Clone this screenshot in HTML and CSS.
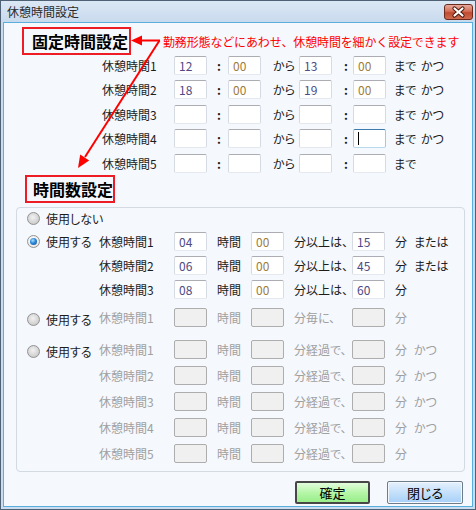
FILE: index.html
```html
<!DOCTYPE html>
<html lang="ja">
<head>
<meta charset="utf-8">
<title>休憩時間設定</title>
<link rel="stylesheet" href="styles.css">
</head>
<body>
<div class="window">
  <div class="titlebar">
    <span class="title">休憩時間設定</span>
    <span class="close">
      <svg width="29" height="16" viewBox="0 0 29 16">
        <path d="M10.5 4.5 L18.5 11.5 M18.5 4.5 L10.5 11.5" stroke="#4a1a10" stroke-width="4.2" stroke-linecap="round"/>
        <path d="M10.5 4.5 L18.5 11.5 M18.5 4.5 L10.5 11.5" stroke="#ffffff" stroke-width="2.2" stroke-linecap="round"/>
      </svg>
    </span>
  </div>
  <div class="client">
    <div class="head-row">
      <div class="redbox box1">固定時間設定</div>
      <div class="note">勤務形態などにあわせ、休憩時間を細かく設定できます</div>
    </div>
    <div class="fixed">
      <div class="frow">
        <span class="lbl">休憩時間1</span><span class="tb num">12</span><span class="colon c1">:</span><span class="tb zero">00</span><span class="kara">から</span><span class="tb num">13</span><span class="colon c2">:</span><span class="tb zero">00</span><span class="made">まで</span><span>かつ</span>
      </div>
      <div class="frow">
        <span class="lbl">休憩時間2</span><span class="tb num">18</span><span class="colon c1">:</span><span class="tb zero">00</span><span class="kara">から</span><span class="tb num">19</span><span class="colon c2">:</span><span class="tb zero">00</span><span class="made">まで</span><span>かつ</span>
      </div>
      <div class="frow">
        <span class="lbl">休憩時間3</span><span class="tb"></span><span class="colon c1">:</span><span class="tb"></span><span class="kara">から</span><span class="tb"></span><span class="colon c2">:</span><span class="tb"></span><span class="made">まで</span><span>かつ</span>
      </div>
      <div class="frow">
        <span class="lbl">休憩時間4</span><span class="tb"></span><span class="colon c1">:</span><span class="tb"></span><span class="kara">から</span><span class="tb"></span><span class="colon c2">:</span><span class="tb focus"><span class="caret"></span></span><span class="made">まで</span><span>かつ</span>
      </div>
      <div class="frow">
        <span class="lbl">休憩時間5</span><span class="tb"></span><span class="colon c1">:</span><span class="tb"></span><span class="kara">から</span><span class="tb"></span><span class="colon c2">:</span><span class="tb"></span><span class="made">まで</span>
      </div>
    </div>
    <div class="redbox box2">時間数設定</div>
    <div class="group">
      <div class="block blk-a">
        <div class="opt"><span class="radio"></span><span>使用しない</span></div>
      </div>
      <div class="block blk-b">
        <div class="opt"><span class="radio on"></span><span>使用する</span></div>
        <div class="rows">
          <div class="hrow"><span class="lbl2">休憩時間1</span><span class="tb num">04</span><span class="u1">時間</span><span class="tb zero">00</span><span class="u2">分以上は、</span><span class="tb num">15</span><span class="u3">分</span><span>または</span></div>
          <div class="hrow"><span class="lbl2">休憩時間2</span><span class="tb num">06</span><span class="u1">時間</span><span class="tb zero">00</span><span class="u2">分以上は、</span><span class="tb num">45</span><span class="u3">分</span><span>または</span></div>
          <div class="hrow"><span class="lbl2">休憩時間3</span><span class="tb num">08</span><span class="u1">時間</span><span class="tb zero">00</span><span class="u2">分以上は、</span><span class="tb num">60</span><span class="u3">分</span></div>
        </div>
      </div>
      <div class="block blk-c dis">
        <div class="opt low"><span class="radio"></span><span>使用する</span></div>
        <div class="rows">
          <div class="hrow"><span class="lbl2">休憩時間1</span><span class="tb off"></span><span class="u1">時間</span><span class="tb off"></span><span class="u2">分毎に、</span><span class="tb off"></span><span class="u3">分</span></div>
        </div>
      </div>
      <div class="block blk-d dis">
        <div class="opt low"><span class="radio"></span><span>使用する</span></div>
        <div class="rows">
          <div class="hrow"><span class="lbl2">休憩時間1</span><span class="tb off"></span><span class="u1">時間</span><span class="tb off"></span><span class="u2">分経過で、</span><span class="tb off"></span><span class="u3">分</span><span>かつ</span></div>
          <div class="hrow"><span class="lbl2">休憩時間2</span><span class="tb off"></span><span class="u1">時間</span><span class="tb off"></span><span class="u2">分経過で、</span><span class="tb off"></span><span class="u3">分</span><span>かつ</span></div>
          <div class="hrow"><span class="lbl2">休憩時間3</span><span class="tb off"></span><span class="u1">時間</span><span class="tb off"></span><span class="u2">分経過で、</span><span class="tb off"></span><span class="u3">分</span><span>かつ</span></div>
          <div class="hrow"><span class="lbl2">休憩時間4</span><span class="tb off"></span><span class="u1">時間</span><span class="tb off"></span><span class="u2">分経過で、</span><span class="tb off"></span><span class="u3">分</span><span>かつ</span></div>
          <div class="hrow"><span class="lbl2">休憩時間5</span><span class="tb off"></span><span class="u1">時間</span><span class="tb off"></span><span class="u2">分経過で、</span><span class="tb off"></span><span class="u3">分</span></div>
        </div>
      </div>
    </div>
    <div class="btns">
      <div class="btn btn-ok">確定</div>
      <div class="btn btn-close">閉じる</div>
    </div>
  </div>
  <svg class="arrows" width="476" height="510" viewBox="0 0 476 510">
    <path d="M160 40.5 L139 40.5" stroke="#f00" stroke-width="2" fill="none"/>
    <polygon points="131,40.5 142,35.5 142,45.5" fill="#f00"/>
    <path d="M159.5 40.5 L85 157" stroke="#f00" stroke-width="2" fill="none"/>
    <polygon points="78,168 80.2,154.6 89.2,160.4" fill="#f00"/>
  </svg>
</div>
</body>
</html>
```

FILE: styles.css
```css
body {
  margin: 0;
  background: #ffffff;
}

.window {
  position: relative;
  width: 476px;
  height: 510px;
  box-sizing: border-box;
  border: 1px solid #4f6275;
  background: #c9dcf0;
  display: flex;
  flex-direction: column;
  font-family: "Noto Sans CJK JP", sans-serif;
  font-size: 12px;
  color: #1c1c1c;
  font-feature-settings: "palt";
}

.titlebar {
  height: 21px;
  display: flex;
  align-items: center;
  padding-left: 6px;
  background: linear-gradient(#dbe7f4, #c9daee);
}

.title {
  color: #2a2a2a;
  font-size: 12px;
  font-feature-settings: normal;
}

.close {
  margin-left: auto;
  margin-right: 2px;
  width: 29px;
  height: 16px;
  box-sizing: border-box;
  border: 1px solid #6a2a1c;
  border-radius: 3px;
  background: linear-gradient(#e8ab9c, #d46e58 45%, #c04a30 55%, #d06a4e);
  display: flex;
  align-items: center;
  justify-content: center;
  overflow: hidden;
}

.close svg {
  display: block;
  flex: none;
}

.client {
  flex: 1;
  margin: 0 2px 2px 2px;
  border: 1px solid #5aaedc;
  background: #f5f8fd;
  display: flex;
  flex-direction: column;
}

.head-row {
  display: flex;
  align-items: center;
  margin-top: 4px;
  margin-left: 18px;
  height: 28px;
}

.redbox {
  box-sizing: border-box;
  height: 28px;
  border: 2px solid #ee1c24;
  font-size: 16px;
  font-weight: 700;
  line-height: 24px;
  padding-left: 8px;
  color: #000;
  font-feature-settings: normal;
  white-space: nowrap;
}

.box1 {
  width: 109px;
}

.box2 {
  width: 90px;
  margin-left: 21px;
  margin-top: -0.7px;
  padding-left: 6px;
}

.note {
  margin-left: 32px;
  color: #f00;
  font-size: 12px;
  letter-spacing: -0.15px;
  font-feature-settings: normal;
  white-space: nowrap;
}

.fixed {
  margin-top: -2.3px;
}

.frow {
  display: flex;
  align-items: center;
  height: 24.6px;
  padding-left: 98px;
  white-space: nowrap;
}

.lbl {
  width: 72px;
}

.tb {
  box-sizing: border-box;
  width: 33px;
  height: 19px;
  flex: none;
  border: 1px solid;
  border-color: #abadb3 #d6dae2 #e3e9ef #d6dae2;
  border-radius: 2px;
  background: #fff;
  padding-left: 4px;
  line-height: 17px;
  font-size: 12px;
  display: flex;
  align-items: center;
}

.tb.num {
  color: #4d4a84;
}

.tb.zero {
  color: #9c7c3c;
}

.tb.focus {
  border-color: #3d7bad #a4c9e3 #b7d9ed #a4c9e3;
}

.caret {
  display: block;
  width: 1px;
  height: 13px;
  background: #000;
}

.tb.off {
  background: #f0f0f0;
  border-color: #adadad;
}

.colon {
  box-sizing: border-box;
  width: 21px;
  font-weight: 700;
}

.c1 {
  padding-left: 10px;
}

.c2 {
  padding-left: 12px;
}

.kara {
  box-sizing: border-box;
  width: 38px;
  padding-left: 12px;
}

.made {
  box-sizing: border-box;
  width: 35px;
  padding-left: 8px;
}

.group {
  margin: 4px 7px 0 12px;
  height: 265px;
  box-sizing: border-box;
  border: 1px solid #d3dae2;
  border-radius: 4px;
}

.block {
  display: flex;
}

.opt {
  box-sizing: border-box;
  width: 82px;
  height: 24px;
  flex: none;
  display: flex;
  align-items: center;
  gap: 6px;
  padding-left: 10px;
  color: #1c1c1c;
  white-space: nowrap;
}

.blk-a .opt {
  width: auto;
  height: 21.5px;
}

.opt.low {
  padding-top: 4px;
}

.blk-d .opt {
  height: 26px;
}

.blk-c {
  margin-top: 4.5px;
}

.blk-d {
  margin-top: 6.5px;
}

.hrow {
  display: flex;
  align-items: center;
  height: 24px;
  white-space: nowrap;
}

.blk-d .hrow {
  height: 26px;
}

.dis .rows {
  color: #a0a0a0;
}

.lbl2 {
  width: 75px;
}

.u1 {
  box-sizing: border-box;
  width: 44px;
  padding-left: 10px;
}

.u2 {
  box-sizing: border-box;
  width: 68px;
  padding-left: 10px;
}

.u3 {
  box-sizing: border-box;
  width: 29px;
  padding-left: 10px;
}

.radio {
  box-sizing: border-box;
  width: 13px;
  height: 13px;
  flex: none;
  border-radius: 50%;
  border: 1px solid #929292;
  background: radial-gradient(circle at 45% 40%, #f2f2f2 0, #d6d6d6 55%, #bdbdbd 100%);
  display: flex;
  align-items: center;
  justify-content: center;
}

.radio.on {
  background: radial-gradient(circle at 45% 40%, #ffffff 0, #eeeeee 60%, #d0d0d0 100%);
}

.radio.on::after {
  content: "";
  width: 7px;
  height: 7px;
  border-radius: 50%;
  background: radial-gradient(circle at 40% 35%, #a8e0ff 0, #2a86d6 45%, #0c4a8e 100%);
}

.btns {
  display: flex;
  justify-content: flex-end;
  gap: 17px;
  padding-right: 9px;
  margin-top: 9px;
}

.btn {
  box-sizing: border-box;
  width: 75px;
  height: 23px;
  display: flex;
  align-items: center;
  justify-content: center;
  font-size: 13px;
  border-radius: 2px;
  color: #000;
}

.btn-ok {
  border: 2px solid #474747;
  background: linear-gradient(#e2fddc, #b6f6a8 50%, #98ee8a);
}

.btn-close {
  width: 76px;
  border: 1px solid #6e7b88;
  box-shadow: inset 0 0 0 1px #f2f8fe;
  background: linear-gradient(#e6f1fc, #c4e0fa 50%, #a6d0f8);
}

.arrows {
  position: absolute;
  top: -1px;
  left: -1px;
  pointer-events: none;
}
```
